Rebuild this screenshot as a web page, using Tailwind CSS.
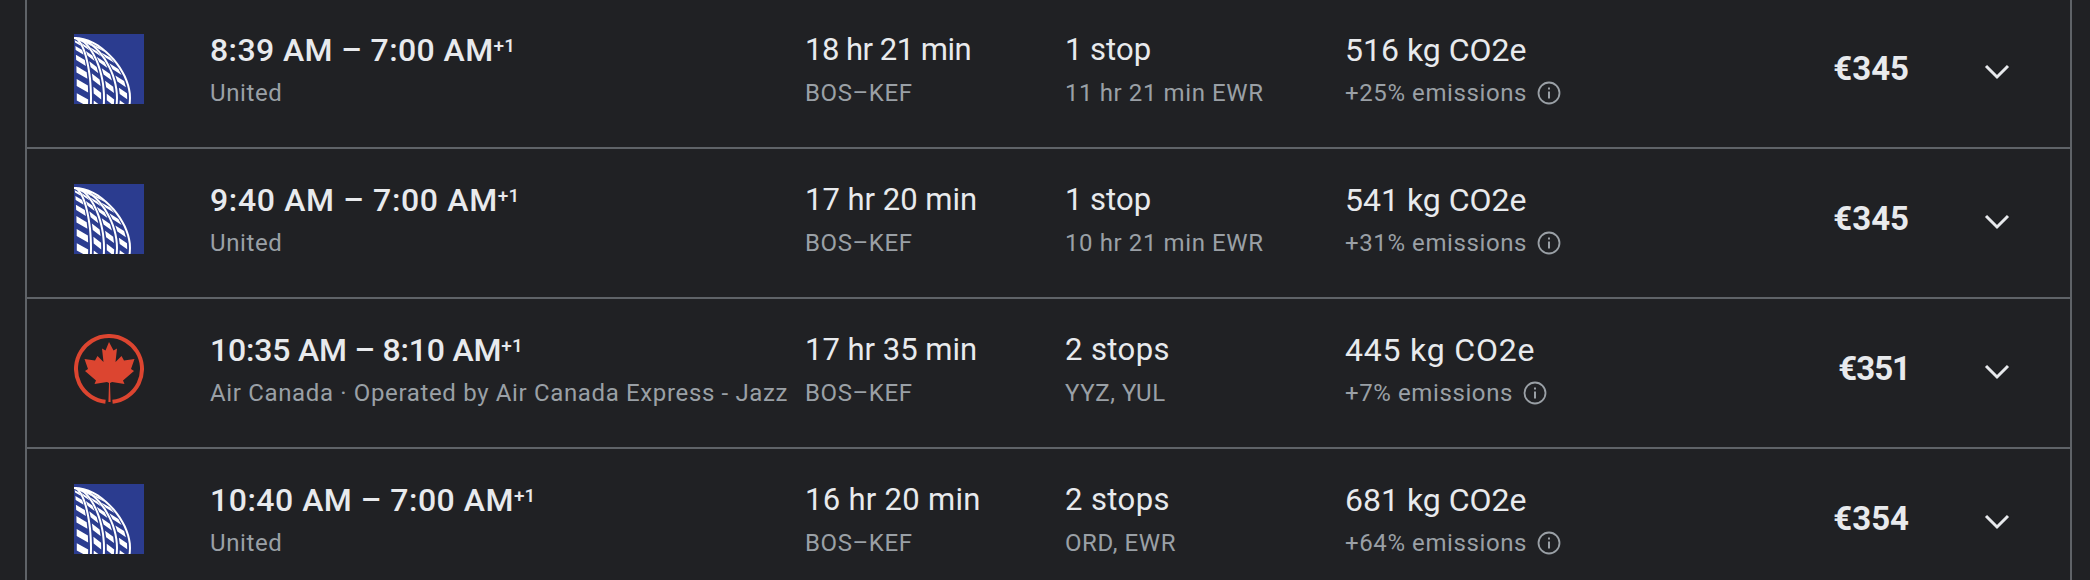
<!DOCTYPE html>
<html lang="en">

<head>
  <meta charset="UTF-8">
  <title>Flights</title>
  <script src="https://cdn.jsdelivr.net/npm/@tailwindcss/browser@4"></script>
</head>

<body class="bg-[#202124] h-[580px] overflow-hidden font-['Roboto',sans-serif]">
  <svg class="hidden">
    <defs>
      <clipPath id="ua-clip">
        <rect width="70" height="70" />
      </clipPath>
      <symbol id="ua" viewBox="0 0 70 70">
        <rect width="70" height="70" fill="#2b3c8f" />
        <g clip-path="url(#ua-clip)">
          <path id="ua-arcs" fill="none" stroke="#fff" stroke-width="2" />
          <path id="ua-cells" fill="#fff" />
        </g>
      </symbol>
      <symbol id="ac" viewBox="0 0 70 70">
        <path d="M31.500 67.800A33 33 0 1 1 38.500 67.800" fill="none" stroke="#dc4530" stroke-width="4" />
        <path fill="#dc4530"
          d="M35 8l4.500 8.500 3.500-2-1.500 13.500 6-6 2.500 4.500 10.500-1.500-3.500 10 3 2-11 9.500 1.500 3.500-12.500-2-2 1 .6 19h-2.200l.6-19-2-1-12.500 2 1.500-3.500-11-9.500 3-2-3.500-10 10.500 1.500 2.500-4.500 6 6-1.500-13.500 3.500 2z" />
      </symbol>
      <symbol id="info" viewBox="0 0 24 24">
        <circle cx="12" cy="12" r="10.500" fill="none" stroke="currentColor" stroke-width="1.800" />
        <path d="M11 10.500h2v7h-2zM11 6.500h2v2h-2z" fill="currentColor" />
      </symbol>
      <symbol id="chev" viewBox="0 0 26 16">
        <path d="M2 2l11 11L24 2" fill="none" stroke="currentColor" stroke-width="3" />
      </symbol>
    </defs>
  </svg>

  <div class="ml-[25px] mr-[18px] -mt-[2px] border-x-2 border-[#5f6368]">

    <div class="h-[151px] border-b-2 border-[#5f6368] flex">
      <svg class="w-[70px] h-[70px] ml-[47px] mt-[36px] shrink-0"><use href="#ua" /></svg>
      <div class="w-[595px] ml-[66px] pt-[32px] shrink-0">
        <div class="text-[32px] leading-[40px] font-medium tracking-[0.4px] text-[#e8eaed]">8:39 AM – 7:00 AM<sup class="text-[19px] tracking-normal">+1</sup></div>
        <div class="text-[24px] leading-[34px] mt-[6px] tracking-[0.6px] text-[#9aa0a6]">United</div>
      </div>
      <div class="w-[260px] pt-[32px] shrink-0">
        <div class="text-[31px] leading-[40px] tracking-[-0.5px] text-[#e8eaed]">18 hr 21 min</div>
        <div class="text-[24px] leading-[34px] mt-[6px] tracking-[0.6px] text-[#9aa0a6]">BOS–KEF</div>
      </div>
      <div class="w-[280px] pt-[32px] shrink-0">
        <div class="text-[31px] leading-[40px] text-[#e8eaed]">1 stop</div>
        <div class="text-[24px] leading-[34px] mt-[6px] tracking-[0.6px] text-[#9aa0a6]">11 hr 21 min EWR</div>
      </div>
      <div class="w-[420px] pt-[32px] shrink-0">
        <div class="text-[32px] leading-[40px] text-[#e8eaed]">516 kg CO2e</div>
        <div class="text-[24px] leading-[34px] mt-[6px] tracking-[0.6px] text-[#9aa0a6] flex items-center gap-[10px]">+25% emissions <svg class="w-[24px] h-[24px]"><use href="#info" /></svg></div>
      </div>
      <div class="w-[144px] pt-[51px] shrink-0 text-right text-[33px] leading-[40px] font-bold text-[#e8eaed]">€345</div>
      <svg class="w-[26px] h-[16px] ml-[75px] mt-[66px] text-[#e8eaed]"><use href="#chev" /></svg>
    </div>

    <div class="h-[150px] border-b-2 border-[#5f6368] flex">
      <svg class="w-[70px] h-[70px] ml-[47px] mt-[35px] shrink-0"><use href="#ua" /></svg>
      <div class="w-[595px] ml-[66px] pt-[31px] shrink-0">
        <div class="text-[32px] leading-[40px] font-medium tracking-[0.65px] text-[#e8eaed]">9:40 AM – 7:00 AM<sup class="text-[19px] tracking-normal">+1</sup></div>
        <div class="text-[24px] leading-[34px] mt-[6px] tracking-[0.6px] text-[#9aa0a6]">United</div>
      </div>
      <div class="w-[260px] pt-[31px] shrink-0">
        <div class="text-[31px] leading-[40px] text-[#e8eaed]">17 hr 20 min</div>
        <div class="text-[24px] leading-[34px] mt-[6px] tracking-[0.6px] text-[#9aa0a6]">BOS–KEF</div>
      </div>
      <div class="w-[280px] pt-[31px] shrink-0">
        <div class="text-[31px] leading-[40px] text-[#e8eaed]">1 stop</div>
        <div class="text-[24px] leading-[34px] mt-[6px] tracking-[0.6px] text-[#9aa0a6]">10 hr 21 min EWR</div>
      </div>
      <div class="w-[420px] pt-[31px] shrink-0">
        <div class="text-[32px] leading-[40px] text-[#e8eaed]">541 kg CO2e</div>
        <div class="text-[24px] leading-[34px] mt-[6px] tracking-[0.6px] text-[#9aa0a6] flex items-center gap-[10px]">+31% emissions <svg class="w-[24px] h-[24px]"><use href="#info" /></svg></div>
      </div>
      <div class="w-[144px] pt-[50px] shrink-0 text-right text-[33px] leading-[40px] font-bold text-[#e8eaed]">€345</div>
      <svg class="w-[26px] h-[16px] ml-[75px] mt-[65px] text-[#e8eaed]"><use href="#chev" /></svg>
    </div>

    <div class="h-[150px] border-b-2 border-[#5f6368] flex">
      <svg class="w-[70px] h-[70px] ml-[47px] mt-[35px] shrink-0"><use href="#ac" /></svg>
      <div class="w-[595px] ml-[66px] pt-[31px] shrink-0">
        <div class="text-[32px] leading-[40px] font-medium tracking-[-0.2px] text-[#e8eaed]">10:35 AM – 8:10 AM<sup class="text-[19px] tracking-normal">+1</sup></div>
        <div class="text-[24px] leading-[34px] mt-[6px] tracking-[0.65px] text-[#9aa0a6]">Air Canada · Operated by Air Canada Express - Jazz</div>
      </div>
      <div class="w-[260px] pt-[31px] shrink-0">
        <div class="text-[31px] leading-[40px] text-[#e8eaed]">17 hr 35 min</div>
        <div class="text-[24px] leading-[34px] mt-[6px] tracking-[0.6px] text-[#9aa0a6]">BOS–KEF</div>
      </div>
      <div class="w-[280px] pt-[31px] shrink-0">
        <div class="text-[31px] leading-[40px] tracking-[0.4px] text-[#e8eaed]">2 stops</div>
        <div class="text-[24px] leading-[34px] mt-[6px] tracking-[0.6px] text-[#9aa0a6]">YYZ, YUL</div>
      </div>
      <div class="w-[420px] pt-[31px] shrink-0">
        <div class="text-[32px] leading-[40px] tracking-[0.8px] text-[#e8eaed]">445 kg CO2e</div>
        <div class="text-[24px] leading-[34px] mt-[6px] tracking-[0.6px] text-[#9aa0a6] flex items-center gap-[10px]">+7% emissions <svg class="w-[24px] h-[24px]"><use href="#info" /></svg></div>
      </div>
      <div class="w-[145px] pt-[50px] shrink-0 text-right text-[33px] leading-[40px] font-bold tracking-[-1px] text-[#e8eaed]">€351</div>
      <svg class="w-[26px] h-[16px] ml-[74px] mt-[65px] text-[#e8eaed]"><use href="#chev" /></svg>
    </div>

    <div class="h-[150px] flex">
      <svg class="w-[70px] h-[70px] ml-[47px] mt-[35px] shrink-0"><use href="#ua" /></svg>
      <div class="w-[595px] ml-[66px] pt-[31px] shrink-0">
        <div class="text-[32px] leading-[40px] font-medium tracking-[0.5px] text-[#e8eaed]">10:40 AM – 7:00 AM<sup class="text-[19px] tracking-normal">+1</sup></div>
        <div class="text-[24px] leading-[34px] mt-[6px] tracking-[0.6px] text-[#9aa0a6]">United</div>
      </div>
      <div class="w-[260px] pt-[31px] shrink-0">
        <div class="text-[31px] leading-[40px] tracking-[0.3px] text-[#e8eaed]">16 hr 20 min</div>
        <div class="text-[24px] leading-[34px] mt-[6px] tracking-[0.6px] text-[#9aa0a6]">BOS–KEF</div>
      </div>
      <div class="w-[280px] pt-[31px] shrink-0">
        <div class="text-[31px] leading-[40px] tracking-[0.4px] text-[#e8eaed]">2 stops</div>
        <div class="text-[24px] leading-[34px] mt-[6px] tracking-[0.6px] text-[#9aa0a6]">ORD, EWR</div>
      </div>
      <div class="w-[420px] pt-[31px] shrink-0">
        <div class="text-[32px] leading-[40px] text-[#e8eaed]">681 kg CO2e</div>
        <div class="text-[24px] leading-[34px] mt-[6px] tracking-[0.6px] text-[#9aa0a6] flex items-center gap-[10px]">+64% emissions <svg class="w-[24px] h-[24px]"><use href="#info" /></svg></div>
      </div>
      <div class="w-[144px] pt-[50px] shrink-0 text-right text-[33px] leading-[40px] font-bold text-[#e8eaed]">€354</div>
      <svg class="w-[26px] h-[16px] ml-[75px] mt-[65px] text-[#e8eaed]"><use href="#chev" /></svg>
    </div>

  </div>

  <script>
    // united globe: meridian arcs plus the blocks between them
    const meridians = [56, 43, 30, 17];
    const point = (rx, deg) => {
      const t = deg * Math.PI / 180;
      const x = rx * Math.cos(t);
      const y = 64 - 60 * Math.sin(t) + 0.1 * x * Math.sin(2 * t);
      return x.toFixed(1) + " " + y.toFixed(1);
    };

    let arcs = "";
    meridians.forEach((rx) => {
      for (let deg = -30; deg <= 90; deg += 5) {
        arcs += (deg === -30 ? "M" : "L") + point(rx, deg);
      }
    });
    document.getElementById("ua-arcs").setAttribute("d", arcs);

    let cells = "";
    meridians.forEach((rx, band) => {
      const inner = (meridians[band + 1] || 0) + 2.8;
      const outer = rx - 2.8;
      for (let deg = -26 + (band % 2) * 7; deg < 76; deg += 14) {
        cells += "M" + point(outer, deg - 3.5) + "L" + point(outer, deg + 3.5)
          + "L" + point(inner, deg + 9.5) + "L" + point(inner, deg + 2.5) + "Z";
      }
    });
    document.getElementById("ua-cells").setAttribute("d", cells);
  </script>
</body>

</html>
